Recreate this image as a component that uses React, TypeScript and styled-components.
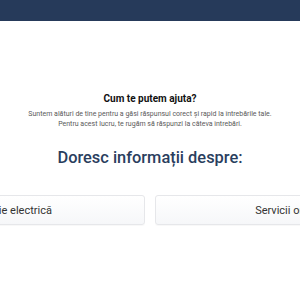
import React from "react";
import styled, { createGlobalStyle } from "styled-components";

const Global = createGlobalStyle`
  html, body { margin: 0; padding: 0; background: #fff; }
  body { font-family: Roboto, "Noto Sans", Arial, sans-serif; }
`;

const Page = styled.div`
  width: 300px;
  height: 300px;
  overflow: hidden;
  display: flex;
  flex-direction: column;
  align-items: center;
`;

const TopBar = styled.header`
  width: 100%;
  height: 21px;
  background: #263a5a;
  flex-shrink: 0;
`;

const Intro = styled.section`
  margin-top: 72px;
  display: flex;
  flex-direction: column;
  align-items: center;
  text-align: center;
`;

const Title = styled.h2`
  margin: 0;
  font-size: 10px;
  line-height: 12px;
  font-weight: 700;
  color: #111;
`;

const Lead = styled.p`
  margin: 4px 0 0;
  font-size: 7px;
  line-height: 10px;
  color: #5a5a5a;
  white-space: nowrap;
`;

const Heading = styled.h1`
  margin: 19px 0 0;
  font-size: 16.4px;
  line-height: 20px;
  font-weight: 500;
  color: #2a3e5e;
`;

const Row = styled.div`
  margin-top: 27px;
  display: flex;
  gap: 10px;
  justify-content: center;
  width: 300px;
`;

const Card = styled.button`
  flex: 0 0 300px;
  height: 30px;
  border: 1px solid #e6e7ea;
  border-radius: 3px;
  background: linear-gradient(#ffffff, #f6f7f9);
  box-shadow: 0 1px 1px rgba(0, 0, 0, 0.03);
  font-family: Roboto, Arial, sans-serif;
  font-size: 11px;
  color: #333;
  display: flex;
  align-items: center;
  justify-content: center;
  padding: 0;
`;

export default function App() {
  return (
    <Page>
      <Global />
      <TopBar />
      <Intro>
        <Title>Cum te putem ajuta?</Title>
        <Lead>
          Suntem alături de tine pentru a găsi răspunsul corect și rapid la întrebările tale.
          <br />
          Pentru acest lucru, te rugăm să răspunzi la câteva întrebări.
        </Lead>
        <Heading>Doresc informații despre:</Heading>
      </Intro>
      <Row>
        <Card>Oferte energie electrică</Card>
        <Card>Servicii online clienți</Card>
      </Row>
    </Page>
  );
}
